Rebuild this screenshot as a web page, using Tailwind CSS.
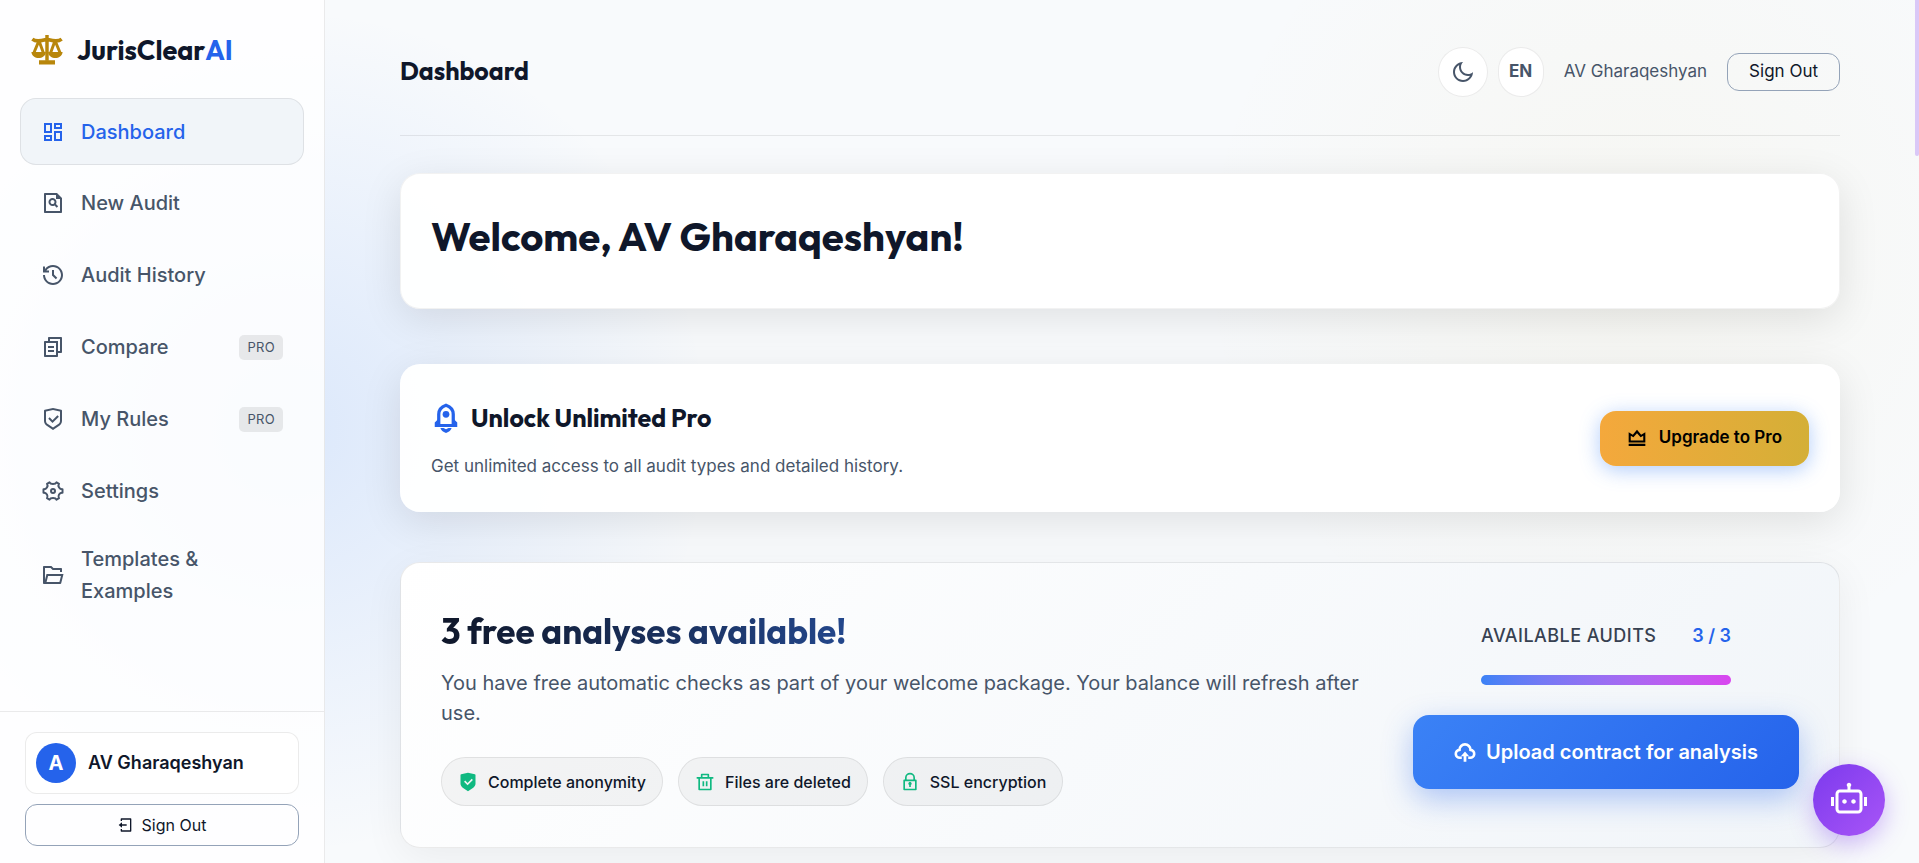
<!DOCTYPE html>
<html lang="en">
<head>
    <meta charset="UTF-8">
    <meta name="viewport" content="width=device-width, initial-scale=1.0">
    <title>JurisClearAI - Dashboard</title>
    <script src="https://cdn.jsdelivr.net/npm/@tailwindcss/browser@4"></script>
</head>
<body class="h-screen overflow-hidden flex bg-[#f8fafc] bg-[radial-gradient(circle_at_15%_50%,rgba(59,130,246,0.15),transparent_25%),radial-gradient(circle_at_85%_30%,rgba(212,175,55,0.05),transparent_25%)] font-[Inter,sans-serif] text-[#0f172a]">
    <svg class="hidden">
        <symbol id="scales" viewBox="0 0 24 24">
            <path fill="none" stroke="currentColor" stroke-width="2.6" d="M12 0.800V20M1 3.800C4 6.200 7.500 5 12 4C16.500 5 20 6.200 23 3.800"/>
            <path fill="none" stroke="currentColor" stroke-width="2.2" d="M6 5L1.800 15M6 5L9.600 15M18 5L14.400 15M18 5L22.200 15"/>
            <path d="M0.300 13.500H11.200C10.500 19.500 1 19.500 0.300 13.500ZM12.800 13.500H23.700C23 19.500 13.500 19.500 12.800 13.500ZM6 19.600H18V22.800H6Z"/>
        </symbol>
        <symbol id="dashboard" viewBox="0 0 24 24">
            <path d="M13 21V11H21V21H13ZM3 13V3H11V13H3ZM9 11V5H5V11H9ZM3 21V15H11V21H3ZM5 19H9V17H5V19ZM15 19H19V13H15V19ZM13 3H21V9H13V3ZM15 5V7H19V5H15Z"/>
        </symbol>
        <symbol id="file-search" viewBox="0 0 24 24">
            <path d="M15 4H5V20H19V8H15V4ZM3 2.9918C3 2.44405 3.44749 2 3.9985 2H16L20.9997 7L21 20.9925C21 21.5489 20.5551 22 20.0066 22H3.9934C3.44476 22 3 21.5447 3 21.0082V2.9918ZM13.529 14.4464C11.9951 15.3524 9.98633 15.1464 8.66839 13.8284C7.1063 12.2663 7.1063 9.73367 8.66839 8.17157C10.2305 6.60948 12.7631 6.60948 14.3252 8.17157C15.6432 9.48951 15.8492 11.4983 14.9432 13.0322L17.1537 15.2426L15.7395 16.6569L13.529 14.4464ZM12.911 12.4142C13.6921 11.6332 13.6921 10.3668 12.911 9.58579C12.13 8.80474 10.8637 8.80474 10.0826 9.58579C9.30156 10.3668 9.30156 11.6332 10.0826 12.4142C10.8637 13.1953 12.13 13.1953 12.911 12.4142Z"/>
        </symbol>
        <symbol id="history" viewBox="0 0 24 24">
            <path d="M12 2C17.5228 2 22 6.47715 22 12C22 17.5228 17.5228 22 12 22C6.47715 22 2 17.5228 2 12H4C4 16.4183 7.58172 20 12 20C16.4183 20 20 16.4183 20 12C20 7.58172 16.4183 4 12 4C9.25022 4 6.82447 5.38734 5.38451 7.50024L8 7.5V9.5H2V3.5H4L3.99989 5.99918C5.82434 3.57075 8.72873 2 12 2ZM13 7L12.9998 11.585L16.2426 14.8284L14.8284 16.2426L10.9998 12.413L11 7H13Z"/>
        </symbol>
        <symbol id="file-copy" viewBox="0 0 24 24">
            <path d="M7 6V3C7 2.44772 7.44752 2 8 2H20C20.5521 2 21 2.44772 21 3V17C21 17.5523 20.5521 18 20 18H17V21C17 21.5519 16.5499 22 16 22H4C3.45059 22 3 21.5554 3 21V7C3 6.44811 3.45264 6 4 6H7ZM5 8V20H15V8H5ZM9 6H17V16H19V4H9V6ZM7 11H13V13H7V11ZM7 15H13V17H7V15Z"/>
        </symbol>
        <symbol id="shield" viewBox="0 0 24 24">
            <path d="M12 1L20.2169 2.82598C20.6745 2.92766 21 3.33347 21 3.80217V13.7889C21 15.795 19.9974 17.6684 18.3282 18.7812L12 23L5.6718 18.7812C4.00261 17.6684 3 15.795 3 13.7889V3.80217C3 3.33347 3.32553 2.92766 3.78307 2.82598L12 1ZM12 3.04879L5 4.60434V13.7889C5 15.1263 5.6684 16.3752 6.7812 17.1171L12 20.5963L17.2188 17.1171C18.3316 16.3752 19 15.1263 19 13.7889V4.60434L12 3.04879ZM16.4524 8.22183L17.8666 9.63604L11.5026 16L7.25999 11.7574L8.67421 10.3431L11.5019 13.1709L16.4524 8.22183Z"/>
        </symbol>
        <symbol id="shield-fill" viewBox="0 0 24 24">
            <path fill-rule="evenodd" d="M12 1L20.2169 2.82598C20.6745 2.92766 21 3.33347 21 3.80217V13.7889C21 15.795 19.9974 17.6684 18.3282 18.7812L12 23L5.6718 18.7812C4.00261 17.6684 3 15.795 3 13.7889V3.80217C3 3.33347 3.32553 2.92766 3.78307 2.82598L12 1ZM16.4524 8.22183L11.5019 13.1709L8.67421 10.3431L7.25999 11.7574L11.5026 16L17.8666 9.63604L16.4524 8.22183Z"/>
        </symbol>
        <symbol id="gear" viewBox="0 0 24 24">
            <path fill="none" stroke="currentColor" stroke-width="2" stroke-linejoin="round" d="M8.500 3.300C9.500 5.600 14.500 5.600 15.500 3.300L18 4.800C16.500 7 18.500 10.500 21.500 10.300V13.700C18.500 13.500 16.500 17 18 19.200L15.500 20.700C14.500 18.400 9.500 18.400 8.500 20.700L6 19.200C7.500 17 5.500 13.500 2.500 13.700V10.300C5.500 10.500 7.500 7 6 4.800Z"/>
            <circle cx="12" cy="12" r="2" fill="none" stroke="currentColor" stroke-width="2"/>
        </symbol>
        <symbol id="folder" viewBox="0 0 24 24">
            <path d="M3 21C2.44772 21 2 20.5523 2 20V4C2 3.44772 2.44772 3 3 3H10.4142L12.4142 5H20C20.5523 5 21 5.44772 21 6V9H19V7H11.5858L9.58579 5H4V16.998L5.5 11H22.5L20.1894 20.2425C20.0781 20.6877 19.6781 21 19.2192 21H3ZM19.9384 13H7.06155L5.56155 19H18.4384L19.9384 13Z"/>
        </symbol>
        <symbol id="logout" viewBox="0 0 24 24">
            <path d="M4 18H6V20H18V4H6V6H4V3C4 2.44772 4.44772 2 5 2H19C19.5523 2 20 2.44772 20 3V21C20 21.5523 19.5523 22 19 22H5C4.44772 22 4 21.5523 4 21V18ZM6 11H13V13H6V16L1 12L6 8V11Z"/>
        </symbol>
        <symbol id="moon" viewBox="0 0 24 24">
            <path d="M10 7C10 10.866 13.134 14 17 14C18.9584 14 20.729 13.1957 21.9995 11.8995C22 11.933 22 11.9665 22 12C22 17.5228 17.5228 22 12 22C6.47715 22 2 17.5228 2 12C2 6.47715 6.47715 2 12 2C12.0335 2 12.067 2 12.1005 2.00049C10.8043 3.27098 10 5.04157 10 7ZM4 12C4 16.4183 7.58172 20 12 20C15.0583 20 17.7158 18.2839 19.062 15.7621C18.3945 15.9187 17.7035 16 17 16C12.0294 16 8 11.9706 8 7C8 6.29648 8.08133 5.60547 8.2379 4.938C5.71611 6.28423 4 8.9417 4 12Z"/>
        </symbol>
        <symbol id="rocket" viewBox="0 0 24 24">
            <path fill="none" stroke="currentColor" stroke-width="2.600" d="M6.200 17.500V9C6.200 5.500 8.500 3 12 1.800C15.500 3 17.800 5.500 17.800 9V17.500"/>
            <path d="M3 19.200V15.500L6 12.500V16.700H18V12.500L21 15.500V19.200Z"/>
            <circle cx="12" cy="9" r="2.700"/>
            <path d="M7.500 20H10L12 21L14 20H16.500C16 21.800 14.500 23 12 24C9.500 23 8 21.800 7.500 20Z"/>
        </symbol>
        <symbol id="crown" viewBox="0 0 24 24">
            <path fill-rule="evenodd" d="M2 19H22V21.500H2V19ZM2 5L7 8L12 2L17 8L22 5V17.500H2V5ZM4.500 9.300V15H19.500V9.300L16.300 11.200L12 6.200L7.700 11.200L4.500 9.300Z"/>
        </symbol>
        <symbol id="bin" viewBox="0 0 24 24">
            <path d="M17 6H22V8H20V21C20 21.5523 19.5523 22 19 22H5C4.44772 22 4 21.5523 4 21V8H2V6H7V3C7 2.44772 7.44772 2 8 2H16C16.5523 2 17 2.44772 17 3V6ZM18 8H6V20H18V8ZM9 11H11V17H9V11ZM13 11H15V17H13V11ZM9 4V6H15V4H9Z"/>
        </symbol>
        <symbol id="lock" viewBox="0 0 24 24">
            <path fill="none" stroke="currentColor" stroke-width="2" stroke-linejoin="round" d="M5 10H19V21H5ZM7 10V7A5 5 0 0 1 17 7V10"/>
            <path d="M11 15.732A2 2 0 1 1 13 15.732V18H11Z"/>
        </symbol>
        <symbol id="upload" viewBox="0 0 24 24">
            <path fill="none" stroke="currentColor" stroke-width="2.800" d="M8.500 18.300H6.500A4.300 4.300 0 0 1 6 9.700A6 6 0 0 1 18 9.700A4.300 4.300 0 0 1 17.500 18.300H15.500"/>
            <path d="M12 11.500L16.500 16.500H13.500V22.500H10.500V16.500H7.500Z"/>
        </symbol>
        <symbol id="robot" viewBox="0 0 24 24">
            <path d="M13.5 2C13.5 2.44425 13.3069 2.84339 13 3.11805V5H18C19.6569 5 21 6.34315 21 8V18C21 19.6569 19.6569 21 18 21H6C4.34315 21 3 19.6569 3 18V8C3 6.34315 4.34315 5 6 5H11V3.11805C10.6931 2.84339 10.5 2.44425 10.5 2C10.5 1.17157 11.1716 0.5 12 0.5C12.8284 0.5 13.5 1.17157 13.5 2ZM6 7C5.44772 7 5 7.44772 5 8V18C5 18.5523 5.44772 19 6 19H18C18.5523 19 19 18.5523 19 18V8C19 7.44772 18.5523 7 18 7H13H11H6ZM2 10H0V16H2V10ZM22 10H24V16H22V10ZM9 14.5C9.82843 14.5 10.5 13.8284 10.5 13C10.5 12.1716 9.82843 11.5 9 11.5C8.17157 11.5 7.5 12.1716 7.5 13C7.5 13.8284 8.17157 14.5 9 14.5ZM15 14.5C15.8284 14.5 16.5 13.8284 16.5 13C16.5 12.1716 15.8284 11.5 15 11.5C14.1716 11.5 13.5 12.1716 13.5 13C13.5 13.8284 14.1716 14.5 15 14.5Z"/>
        </symbol>
    </svg>

    <!-- Sidebar -->
    <aside class="w-[325px] shrink-0 flex flex-col bg-white/85 border-r border-black/8">
        <a href="#" class="flex items-center gap-[14px] h-[98px] pl-[31px] pt-[2px] font-[Outfit,Lato,sans-serif] text-[27px] font-bold">
            <svg class="size-8 fill-current text-[#b8860b]"><use href="#scales"/></svg>
            <span>JurisClear<span class="text-[#2563eb]">AI</span></span>
        </a>
        <nav class="flex-1 flex flex-col gap-1 px-5 text-xl font-medium text-[#475569]">
            <a href="#" class="flex items-center gap-4 h-[67px] px-5 rounded-2xl border border-black/8 bg-[#f1f5f9] text-[#2563eb]">
                <svg class="size-6 fill-current shrink-0"><use href="#dashboard"/></svg>Dashboard
            </a>
            <a href="#" class="flex items-center gap-4 h-[68px] px-[21px]">
                <svg class="size-6 fill-current shrink-0"><use href="#file-search"/></svg>New Audit
            </a>
            <a href="#" class="flex items-center gap-4 h-[68px] px-[21px]">
                <svg class="size-6 fill-current shrink-0"><use href="#history"/></svg>Audit History
            </a>
            <a href="#" class="flex items-center gap-4 h-[68px] px-[21px]">
                <svg class="size-6 fill-current shrink-0"><use href="#file-copy"/></svg>Compare
                <span class="ml-auto px-2 py-1 rounded-[5px] bg-black/8 text-[13px] leading-[17px] font-normal tracking-wide">PRO</span>
            </a>
            <a href="#" class="flex items-center gap-4 h-[68px] px-[21px]">
                <svg class="size-6 fill-current shrink-0"><use href="#shield"/></svg>My Rules
                <span class="ml-auto px-2 py-1 rounded-[5px] bg-black/8 text-[13px] leading-[17px] font-normal tracking-wide">PRO</span>
            </a>
            <a href="#" class="flex items-center gap-4 h-[68px] px-[21px]">
                <svg class="size-6 fill-current shrink-0"><use href="#gear"/></svg>Settings
            </a>
            <a href="#" class="flex items-center gap-4 py-[14px] px-[21px] leading-8">
                <svg class="size-6 fill-current shrink-0"><use href="#folder"/></svg><span>Templates &amp;<br>Examples</span>
            </a>
        </nav>
        <div class="flex flex-col gap-[10px] px-[25px] pt-5 pb-[17px] border-t border-black/8">
            <div class="flex items-center gap-3 p-[10px] rounded-xl border border-black/8 bg-white text-lg font-semibold">
                <span class="flex items-center justify-center size-10 rounded-full bg-[#2563eb] text-white text-xl font-bold">A</span>AV Gharaqeshyan
            </div>
            <button class="flex items-center justify-center gap-2 h-[42px] rounded-xl border border-[#94a3b8] text-base">
                <svg class="size-4 fill-current"><use href="#logout"/></svg>Sign Out
            </button>
        </div>
    </aside>

    <!-- Main content -->
    <main class="flex-1 min-w-0 pl-[75px] pr-[79px]">
        <header class="flex items-center justify-between h-[136px] pt-2 border-b border-black/8">
            <h2 class="font-[Outfit,Lato,sans-serif] text-[25px] font-bold">Dashboard</h2>
            <div class="flex items-center text-[17px] text-[#475569]">
                <button aria-label="Dark mode" class="flex items-center justify-center size-[50px] mr-[10px] rounded-full border border-black/8 bg-white">
                    <svg class="size-6 fill-current"><use href="#moon"/></svg>
                </button>
                <button class="h-[50px] w-[46px] mr-5 rounded-full border border-black/8 bg-white font-bold">EN</button>
                <span class="mr-5">AV Gharaqeshyan</span>
                <button class="h-[38px] px-[21px] rounded-xl border border-[#94a3b8] text-[#0f172a]">Sign Out</button>
            </div>
        </header>

        <section class="h-[136px] mt-[37px] px-[30px] pt-8 rounded-[20px] border border-black/5 bg-white/95 shadow-[0_10px_40px_rgba(0,0,0,0.1)]">
            <h1 class="font-[Outfit,Lato,sans-serif] text-[40px] leading-[60px] font-bold">Welcome, AV Gharaqeshyan!</h1>
        </section>

        <section class="flex items-center justify-between h-[148px] mt-[55px] px-[31px] rounded-[20px] bg-white/95 shadow-[0_10px_40px_rgba(0,0,0,0.1)]">
            <div class="pt-1">
                <h3 class="flex items-center gap-[10px] mb-4 font-[Outfit,Lato,sans-serif] text-[25px] leading-9 font-bold">
                    <svg class="size-[30px] fill-current text-[#2563eb]"><use href="#rocket"/></svg>Unlock Unlimited Pro
                </h3>
                <p class="text-[17px] leading-7 text-[#475569]">Get unlimited access to all audit types and detailed history.</p>
            </div>
            <button class="flex items-center gap-3 h-[55px] px-[27px] rounded-2xl bg-linear-to-r from-[#f4a83c] to-[#d4af37] text-[17px] font-semibold text-black shadow-[0_4px_20px_rgba(59,130,246,0.4)]">
                <svg class="size-5 fill-current"><use href="#crown"/></svg>Upgrade to Pro
            </button>
        </section>

        <section class="flex items-center justify-between h-[286px] mt-[50px] px-10 rounded-[20px] border border-black/8 bg-linear-[135deg] from-white to-[#f1f5f9] shadow-[0_10px_40px_rgba(0,0,0,0.06)]">
            <div class="w-[930px] pt-1">
                <h2 class="w-fit bg-linear-to-r from-[#0f172a] to-[#23478c] bg-clip-text font-[Outfit,Lato,sans-serif] text-[35px] leading-[46px] font-bold text-transparent">3 free analyses available!</h2>
                <p class="mt-[14px] text-xl leading-[30px] text-[#475569]">You have free automatic checks as part of your welcome package. Your balance will refresh after use.</p>
                <ul class="flex gap-[15px] mt-[29px] text-base font-medium">
                    <li class="flex items-center gap-[10px] h-[49px] px-4 rounded-full border border-black/8 bg-black/4">
                        <svg class="size-5 fill-current text-[#10b981]"><use href="#shield-fill"/></svg>Complete anonymity
                    </li>
                    <li class="flex items-center gap-[10px] h-[49px] px-4 rounded-full border border-black/8 bg-black/4">
                        <svg class="size-5 fill-current text-[#10b981]"><use href="#bin"/></svg>Files are deleted
                    </li>
                    <li class="flex items-center gap-[10px] h-[49px] px-4 rounded-full border border-black/8 bg-black/4">
                        <svg class="size-5 fill-current text-[#10b981]"><use href="#lock"/></svg>SSL encryption
                    </li>
                </ul>
            </div>
            <div class="flex flex-col items-center w-[386px]">
                <div class="w-[250px]">
                    <div class="flex justify-between text-lg font-medium text-[#374151]">
                        <span class="tracking-wide">AVAILABLE AUDITS</span>
                        <span class="font-semibold text-[#2563eb]">3 / 3</span>
                    </div>
                    <div class="h-[10px] mt-[25px] rounded-full bg-linear-to-r from-[#3b82f6] to-[#d946ef]"></div>
                </div>
                <button class="flex items-center justify-center gap-[10px] w-full h-[74px] mt-[30px] rounded-2xl bg-linear-[135deg] from-[#3b82f6] to-[#2563eb] text-xl font-semibold text-white shadow-[0_10px_30px_rgba(37,99,235,0.35)]">
                    <svg class="size-[22px] fill-current"><use href="#upload"/></svg>Upload contract for analysis
                </button>
            </div>
        </section>
    </main>

    <!-- Scroll thumb and chat button -->
    <div class="fixed right-0 top-0 w-1 h-[156px] rounded-b bg-[#dac8f7]"></div>
    <button aria-label="Chat" class="fixed right-[34px] bottom-[27px] flex items-center justify-center size-[72px] rounded-full bg-linear-[135deg] from-[#7c3aed] to-[#a855f7] text-white shadow-[0_8px_24px_rgba(124,58,237,0.35)]">
        <svg class="size-9 fill-current"><use href="#robot"/></svg>
    </button>
</body>
</html>
